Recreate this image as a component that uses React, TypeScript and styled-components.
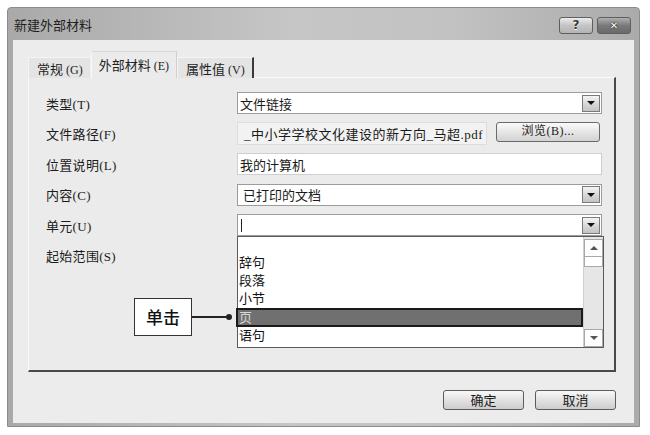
import styled, { createGlobalStyle } from 'styled-components';

const GlobalStyle = createGlobalStyle`
  body {
    margin: 0;
    background: #ffffff;
    font-family: "Noto Sans CJK SC", sans-serif;
  }
`;

const UI = `"Noto Sans CJK SC", "Noto Sans", sans-serif`;
const SONG = `"Liberation Serif", "Noto Sans CJK SC", serif`;

export default function App() {
  return (
    <>
      <GlobalStyle />
      <Window>
        <TitleBar>
          <Title>新建外部材料</Title>
          <CaptionButtons>
            <CaptionButton>?</CaptionButton>
            <CaptionButton dark>✕</CaptionButton>
          </CaptionButtons>
        </TitleBar>
        <Client>
          <TabRow>
            <Tab>常规<Key>(G)</Key></Tab>
            <Tab active>外部材料<Key>(E)</Key></Tab>
            <Tab last>属性值<Key>(V)</Key></Tab>
          </TabRow>
          <Panel>
            <Form>
              <Label>类型(T)</Label>
              <Combo>
                <FieldText>文件链接</FieldText>
                <DropButton><Arrow /></DropButton>
              </Combo>

              <Label>文件路径(F)</Label>
              <PathRow>
                <PathField>
                  <span>_中小学学校文化建设的新方向_马超.pdf</span>
                </PathField>
                <BrowseButton>浏览(B)...</BrowseButton>
              </PathRow>

              <Label>位置说明(L)</Label>
              <TextBox>
                <FieldText>我的计算机</FieldText>
              </TextBox>

              <Label>内容(C)</Label>
              <Combo>
                <FieldText indent>已打印的文档</FieldText>
                <DropButton><Arrow /></DropButton>
              </Combo>

              <Label>单元(U)</Label>
              <Combo>
                <Caret />
                <DropButton><Arrow /></DropButton>
                <DropList>
                  <Items>
                    <Item>辞句</Item>
                    <Item>段落</Item>
                    <Item>小节</Item>
                    <Item selected>页</Item>
                    <Item>语句</Item>
                  </Items>
                  <ScrollBar>
                    <ScrollButton><Arrow up small /></ScrollButton>
                    <Thumb />
                    <Track />
                    <ScrollButton><Arrow small /></ScrollButton>
                  </ScrollBar>
                  <Callout>
                    <CalloutBox>单击</CalloutBox>
                    <Leader />
                    <Dot />
                  </Callout>
                </DropList>
              </Combo>

              <Label>起始范围(S)</Label>
              <div />
            </Form>
          </Panel>
          <ButtonRow>
            <DialogButton>确定</DialogButton>
            <DialogButton>取消</DialogButton>
          </ButtonRow>
        </Client>
      </Window>
    </>
  );
}

const Window = styled.div`
  box-sizing: border-box;
  margin: 7px 0 0 7px;
  width: 633px;
  height: 420px;
  border: 1px solid #8c8c8c;
  border-radius: 4px 4px 0 0;
  padding: 0 5px 3px 5px;
  background: linear-gradient(to right, #a9a9a9 0%, #c6c6c6 45%, #c2c2c2 70%, #ababab 100%);
  display: flex;
  flex-direction: column;
`;

const TitleBar = styled.div`
  height: 32px;
  display: flex;
  justify-content: space-between;
  align-items: flex-start;
`;

const Title = styled.div`
  font-family: ${UI};
  font-size: 13px;
  color: #1e1e1e;
  padding: 7px 0 0 1px;
`;

const CaptionButtons = styled.div`
  display: flex;
  gap: 4px;
  padding: 9px 3px 0 0;
`;

const CaptionButton = styled.div<{ dark?: boolean }>`
  box-sizing: border-box;
  width: 34px;
  height: 17px;
  border: 1px solid #5e5e5e;
  border-radius: 3px;
  background: ${p => p.dark
    ? 'linear-gradient(#b0b0b0, #7a7a7a 50%, #6a6a6a)'
    : 'linear-gradient(#ececec, #c4c4c4 50%, #b4b4b4)'};
  color: ${p => p.dark ? '#ffffff' : '#3a3a3a'};
  font-family: "DejaVu Sans", sans-serif;
  font-weight: bold;
  font-size: ${p => p.dark ? '10px' : '12px'};
  line-height: 15px;
  text-align: center;
  text-shadow: ${p => p.dark ? '0 0 2px #222, 0 0 1px #222' : '0 1px 0 #fff'};
`;

const Client = styled.div`
  flex: 1;
  background: #ececec;
  padding: 12px 18px 0 15px;
  display: flex;
  flex-direction: column;
`;

const TabRow = styled.div`
  display: flex;
  align-items: flex-end;
  height: 26px;
  position: relative;
  z-index: 1;
  margin-bottom: -1px;
`;

const Tab = styled.div<{ active?: boolean; last?: boolean }>`
  box-sizing: border-box;
  height: ${p => p.active ? '27px' : '21px'};
  padding: ${p => p.active ? '3px 7px 0 7px' : '1px 7px 0 8px'};
  font-family: ${UI};
  font-size: 13px;
  color: #1e1e1e;
  background: ${p => p.active ? '#ebebeb' : '#e4e4e4'};
  border-top: 1px solid ${p => p.active ? '#d8d8d8' : '#f4f4f4'};
  border-left: 1px solid ${p => p.active ? '#f8f8f8' : '#f4f4f4'};
  border-right: ${p => p.last ? '2px solid #3a3a3a' : p.active ? '1px solid #d0d0d0' : '1px solid #f0f0f0'};
  white-space: nowrap;
`;

const Key = styled.span`
  font-family: ${SONG};
  font-size: 12px;
  margin-left: 3px;
`;

const Panel = styled.div`
  box-sizing: border-box;
  height: 295px;
  background: #ebebeb;
  border-left: 1px solid #fafafa;
  border-top: 1px solid #fafafa;
  border-right: 2px solid #4a4a4a;
  border-bottom: 2px solid #4a4a4a;
  padding: 14px 12px 0 17px;
`;

const Form = styled.div`
  display: grid;
  grid-template-columns: 191px 365px;
  grid-auto-rows: 22px;
  row-gap: 8.5px;
  align-items: center;
`;

const Label = styled.div`
  font-family: ${SONG};
  font-size: 13px;
  color: #1c1c1c;
  letter-spacing: 0.3px;
`;

const Field = styled.div`
  box-sizing: border-box;
  height: 22px;
  border: 1px solid #9c9c9c;
  background: #ffffff;
  display: flex;
  align-items: center;
  position: relative;
`;

const Combo = styled(Field)``;

const TextBox = styled(Field)`
  border-color: #cfcfcf;
`;

const FieldText = styled.span<{ indent?: boolean }>`
  flex: 1;
  padding-left: ${p => p.indent ? '5px' : '2px'};
  font-family: ${SONG};
  font-size: 13px;
  color: #1a1a1a;
  white-space: nowrap;
`;

const Caret = styled.span`
  flex: 1;
  margin-left: 3px;
  height: 13px;
  border-left: 1px solid #222;
  max-width: 0;
`;

const DropButton = styled.div`
  box-sizing: border-box;
  width: 18px;
  height: 17px;
  margin: 0 1px 0 auto;
  border: 1px solid #7a7a7a;
  background: linear-gradient(#f4f4f4, #d4d4d4 60%, #c4c4c4);
  display: flex;
  align-items: center;
  justify-content: center;
`;

const Arrow = styled.span<{ up?: boolean; small?: boolean }>`
  width: 0;
  height: 0;
  border-left: 4px solid transparent;
  border-right: 4px solid transparent;
  ${p => p.up
    ? `border-bottom: 4px solid ${p.small ? '#555' : '#111'};`
    : `border-top: 4px solid ${p.small ? '#555' : '#111'};`}
`;

const PathRow = styled.div`
  display: flex;
  align-items: flex-start;
  gap: 9px;
  height: 23px;
`;

const PathField = styled.div`
  box-sizing: border-box;
  width: 250px;
  height: 23px;
  background: #f2f2f2;
  border: 1px solid #dcdcdc;
  display: flex;
  justify-content: flex-end;
  align-items: center;
  padding-right: 3px;

  span {
    white-space: nowrap;
    font-family: ${SONG};
    font-size: 13px;
    letter-spacing: 0.5px;
    color: #1a1a1a;
  }
`;

const BrowseButton = styled.div`
  box-sizing: border-box;
  width: 104px;
  height: 20px;
  border: 1px solid #6a6a6a;
  border-radius: 3px;
  background: linear-gradient(#fafafa, #e6e6e6 50%, #d2d2d2);
  font-family: ${SONG};
  font-size: 12px;
  color: #222;
  text-align: center;
  line-height: 17px;
  letter-spacing: 0.5px;
`;

const DropList = styled.div`
  position: absolute;
  top: 21px;
  left: -1px;
  width: 367px;
  height: 112px;
  box-sizing: border-box;
  border: 1px solid #5a5a5a;
  background: #ffffff;
  display: flex;
  z-index: 2;
`;

const Items = styled.div`
  flex: 1;
  padding-top: 17px;
`;

const Item = styled.div<{ selected?: boolean }>`
  box-sizing: border-box;
  height: ${p => p.selected ? '19px' : '18px'};
  line-height: ${p => p.selected ? '15px' : '18px'};
  padding-left: 1px;
  margin-left: ${p => p.selected ? '-2px' : '0'};
  font-family: ${SONG};
  font-size: 13px;
  color: ${p => p.selected ? '#d8d8d8' : '#111'};
  background: ${p => p.selected ? '#707070' : 'transparent'};
  border: ${p => p.selected ? '2px solid #1a1a1a' : 'none'};
`;

const ScrollBar = styled.div`
  width: 19px;
  background: #e6e6e6;
  border-left: 1px solid #cfcfcf;
  display: flex;
  flex-direction: column;
  padding-top: 2px;
`;

const ScrollButton = styled.div`
  box-sizing: border-box;
  height: 18px;
  background: #fdfdfd;
  border: 1px solid #a8a8a8;
  display: flex;
  align-items: center;
  justify-content: center;
`;

const Thumb = styled.div`
  height: 9px;
  background: #ffffff;
  border: 1px solid #a8a8a8;
  border-top: none;
`;

const Track = styled.div`
  flex: 1;
`;

const Callout = styled.div`
  position: absolute;
  left: -104px;
  top: 61px;
  display: flex;
  align-items: center;
`;

const CalloutBox = styled.div`
  box-sizing: border-box;
  width: 58px;
  height: 38px;
  border: 1px solid #333;
  background: #ffffff;
  font-family: ${UI};
  font-size: 17px;
  font-weight: 500;
  color: #111;
  text-align: center;
  line-height: 35px;
`;

const Leader = styled.div`
  width: 36px;
  height: 1.5px;
  background: #222;
`;

const Dot = styled.div`
  width: 6px;
  height: 6px;
  margin-left: -2px;
  border-radius: 50%;
  background: #222;
`;

const ButtonRow = styled.div`
  display: flex;
  justify-content: flex-end;
  gap: 11px;
  padding-top: 18px;
`;

const DialogButton = styled.div`
  box-sizing: border-box;
  width: 81px;
  height: 20px;
  border: 1px solid #5c5c5c;
  border-radius: 3px;
  background: linear-gradient(#f8f8f8, #e2e2e2 50%, #cdcdcd);
  font-family: ${UI};
  font-size: 13px;
  color: #1a1a1a;
  text-align: center;
  line-height: 18px;
`;
